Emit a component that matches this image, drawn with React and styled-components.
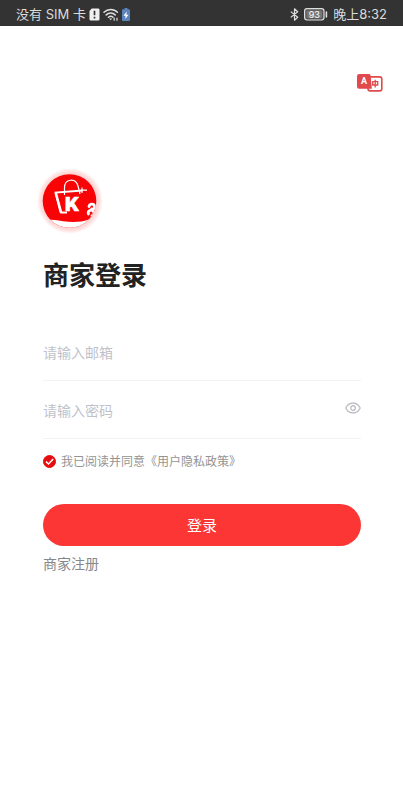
import React, { useState } from "react";
import styled, { createGlobalStyle } from "styled-components";

const GlobalStyle = createGlobalStyle`
  *, *::before, *::after { box-sizing: border-box; }
  body {
    margin: 0;
    background: #fff;
    font-family: "Noto Sans CJK SC", sans-serif;
  }
  button, input { font-family: inherit; }
`;

const Page = styled.div`
  min-height: 100vh;
  display: flex;
  flex-direction: column;
  background: #fff;
`;

const StatusBar = styled.header`
  display: flex;
  align-items: center;
  justify-content: space-between;
  height: 26px;
  padding: 2px 16px 0;
  background: #333;
  color: #dcdcdc;
  font-family: Inter, "Noto Sans CJK SC", sans-serif;
  font-size: 13px;
  line-height: 20px;
`;

const StatusGroup = styled.div`
  display: flex;
  align-items: center;
  gap: ${({ $gap }) => $gap}px;
  white-space: nowrap;

  svg { display: block; flex: none; }
`;

const TopBar = styled.div`
  display: flex;
  justify-content: flex-end;
  padding: 47px 20px 0;
`;

const LanguageButton = styled.button`
  display: block;
  padding: 0;
  border: 0;
  background: none;
  cursor: pointer;

  svg { display: block; }
`;

const Main = styled.main`
  display: flex;
  flex-direction: column;
  align-items: flex-start;
  padding: 73px 42px 40px 43px;
`;

const Logo = styled.svg`
  display: block;
  width: 70px;
  height: 70px;
  margin-left: -8px;
`;

const Title = styled.h1`
  margin: 18px 0 0;
  color: #222;
  font-size: 26px;
  font-weight: 700;
  line-height: 40px;
`;

const Form = styled.form`
  width: 100%;
  margin-top: 29px;
`;

const Field = styled.div`
  display: flex;
  align-items: center;
  height: ${({ $height }) => $height}px;
  border-bottom: 1px solid #f3f3f5;
`;

const Input = styled.input`
  flex: 1;
  min-width: 0;
  height: 40px;
  padding: 0;
  border: 0;
  outline: 0;
  background: none;
  color: #333;
  font-size: 14px;

  &::placeholder { color: #bfc2ca; opacity: 1; }
`;

const EyeButton = styled.button`
  padding: 0;
  margin-bottom: 4px;
  border: 0;
  background: none;
  cursor: pointer;

  svg { display: block; }
`;

const Agreement = styled.label`
  display: flex;
  align-items: center;
  gap: 5px;
  margin-top: 12px;
  color: #949494;
  font-size: 12px;
  line-height: 20px;
`;

const CheckWrap = styled.span`
  display: grid;
  width: 13px;
  height: 13px;

  > * { grid-area: 1 / 1; }
  svg { pointer-events: none; }
  input:not(:checked) + svg path { display: none; }
`;

const CheckInput = styled.input`
  appearance: none;
  width: 13px;
  height: 13px;
  margin: 0;
  border: 1px solid #c8c8c8;
  border-radius: 50%;

  &:checked { background: #e60d10; border-color: #e60d10; }
`;

const SubmitButton = styled.button`
  display: block;
  width: 100%;
  height: 42px;
  margin-top: 33px;
  padding: 0;
  border: 0;
  border-radius: 21px;
  background: #fc3535;
  color: #fff;
  font-size: 15px;
  line-height: 24px;
  cursor: pointer;
`;

const RegisterLink = styled.a`
  margin-top: 7px;
  color: #85878b;
  font-size: 14px;
  line-height: 20px;
  text-decoration: none;
`;

const SimIcon = () => (
  <svg width="11" height="13" viewBox="0 0 11 13" aria-hidden="true">
    <path d="M2.8 0.5h6.4a1.3 1.3 0 0 1 1.3 1.3v9.4a1.3 1.3 0 0 1-1.3 1.3H1.8A1.3 1.3 0 0 1 .5 11.2V3z" fill="#f0f0f0" />
    <path d="M5.5 2.8v4.4M5.5 8.7v1.7" stroke="#333" strokeWidth="1.7" />
  </svg>
);

const WifiIcon = () => (
  <svg width="16" height="13" viewBox="0 0 16 13" fill="none" stroke="#dedede" strokeWidth="1.5" strokeLinecap="round" aria-hidden="true">
    <path d="M1 4.3c3.7-3.8 9.9-3.8 13.4 0M3.2 6.9c2.5-2.5 6.500-2.500 9 0M5.500 9.300c1.300-1.200 3.200-1.200 4.500 0" />
    <path d="M6 10.400 7.700 12.300l1.600-1.900z" fill="#dedede" stroke="none" />
    <path d="M11.200 10.200v2M14 10.200v2" strokeWidth="1.200" />
  </svg>
);

const ChargeIcon = () => (
  <svg width="8" height="13" viewBox="0 0 8 13" aria-hidden="true">
    <path d="M2.5 0h3v1.2H7a1 1 0 0 1 1 1V12a1 1 0 0 1-1 1H1a1 1 0 0 1-1-1V2.2a1 1 0 0 1 1-1h1.5z" fill="#5b84bd" />
    <path d="M4.7 3.5 1.5 7.7h2.1L3.3 11l3.2-4.3H4.4z" fill="#fff" />
  </svg>
);

const BluetoothIcon = () => (
  <svg width="9" height="13" viewBox="0 0 9 13" fill="none" stroke="#dedede" strokeWidth="1.2" strokeLinejoin="round" aria-hidden="true">
    <path d="M.8 3.6 7.7 9.2 4.5 12.2V.8l3.2 3L.8 9.4" />
  </svg>
);

const BatteryIcon = () => (
  <svg width="24" height="13" viewBox="0 0 24 13" aria-hidden="true">
    <rect x=".6" y=".6" width="19.4" height="11.4" rx="2.4" fill="#555" stroke="#dedede" strokeWidth="1.2" />
    <rect x="2.5" y="2.5" width="15.5" height="7.6" rx="1" fill="#777" />
    <path d="M22.4 4v5" stroke="#dedede" strokeWidth="1.6" strokeLinecap="round" />
    <text x="10.3" y="9.6" textAnchor="middle" fill="#fff" fontFamily="Inter, sans-serif" fontSize="9">93</text>
  </svg>
);

const LanguageIcon = () => (
  <svg width="26" height="20" viewBox="0 0 26 20" aria-hidden="true">
    <rect x="11" y="3.9" width="13.8" height="14" rx="2.2" fill="#fff" stroke="#e14a4c" strokeWidth="1.6" />
    <path d="M2.3 1h9.4a2 2 0 0 1 1.9 1.4l1.300 13.400H2.300A2.200 2.200 0 0 1 0 13.600V3.200A2.200 2.200 0 0 1 2.300 1z" fill="#e14a4c" />
    <text x="7" y="11.300" textAnchor="middle" fill="#fff" fontFamily="Roboto, sans-serif" fontSize="9" fontWeight="700">A</text>
    <path d="M15.700 8.700h5v3.300h-5zM18.200 6.800v7.700" fill="none" stroke="#e14a4c" strokeWidth="1.300" />
  </svg>
);

const EyeIcon = () => (
  <svg width="16" height="12" viewBox="0 0 16 12" fill="none" stroke="#b4b7bc" strokeWidth="1.200" aria-hidden="true">
    <path d="M.8 6C4-.6 12-.6 15.200 6 12 12.600 4 12.600.8 6z" />
    <circle cx="8" cy="6" r="2.300" />
  </svg>
);

const BrandLogo = () => (
  <Logo viewBox="0 0 70 70" role="img" aria-label="商家">
    <defs>
      <radialGradient id="halo">
        <stop offset="78%" stopColor="#ffcaca" />
        <stop offset="91%" stopColor="#ffe4e4" />
        <stop offset="100%" stopColor="#fff" />
      </radialGradient>
      <clipPath id="disc"><circle cx="34.500" cy="35" r="26.800" /></clipPath>
    </defs>
    <circle cx="35" cy="35" r="33" fill="url(#halo)" />
    <g clipPath="url(#disc)">
      <path d="M0 0h70v70H0z" fill="#f80406" />
      <path d="M6 54c8-1 14 .2 22 1.200 10 1.300 19 .8 25-1.500l9-3v20H6z" fill="#fff" />
      <g fill="none" stroke="#fff" strokeWidth="2.800" strokeLinecap="round">
        <path d="M54 40.500c.5-3 5-3.200 5.500-.3.400 2.300-1.500 3.200-2.800 2.700" />
        <path d="M53.500 48c-1.200-3.500 3-5 4.800-2.800 1.500 2 .2 4.300-1.300 4.500" />
        <path d="M61 42v12" />
      </g>
    </g>
    <g fill="none" stroke="#fff">
      <path d="M47.500 24.500 20.500 26.500l5.500 20h6" strokeWidth="1.800" />
      <path d="M20.800 27 26 46.500" strokeWidth="2.600" />
      <path d="M47 21.500v5.500M52 24.200h-6" strokeWidth="1.200" />
      <path d="M29.500 29v-7c0-9.500 11-10.500 13.500-2l2 8" strokeWidth="1.200" />
    </g>
    <text x="30" y="45" fill="#fff" stroke="#fff" strokeWidth=".5" fontFamily="Inter, sans-serif" fontSize="19" fontWeight="900">K</text>
  </Logo>
);

export default function App() {
  const [agreed, setAgreed] = useState(true);
  const [visible, setVisible] = useState(false);

  return (
    <Page>
      <GlobalStyle />
      <StatusBar>
        <StatusGroup $gap={3}>
          <span>没有 SIM 卡</span>
          <SimIcon />
          <WifiIcon />
          <ChargeIcon />
        </StatusGroup>
        <StatusGroup $gap={5}>
          <BluetoothIcon />
          <BatteryIcon />
          <span>晚上8:32</span>
        </StatusGroup>
      </StatusBar>
      <TopBar>
        <LanguageButton type="button" aria-label="切换语言">
          <LanguageIcon />
        </LanguageButton>
      </TopBar>
      <Main>
        <BrandLogo />
        <Title>商家登录</Title>
        <Form onSubmit={(e) => e.preventDefault()}>
          <Field $height={58}>
            <Input type="email" placeholder="请输入邮箱" aria-label="邮箱" />
          </Field>
          <Field $height={58}>
            <Input type={visible ? "text" : "password"} placeholder="请输入密码" aria-label="密码" />
            <EyeButton type="button" aria-label="显示密码" onClick={() => setVisible(!visible)}>
              <EyeIcon />
            </EyeButton>
          </Field>
          <Agreement>
            <CheckWrap>
              <CheckInput type="checkbox" checked={agreed} onChange={(e) => setAgreed(e.target.checked)} />
              <svg width="13" height="13" viewBox="0 0 13 13" aria-hidden="true">
                <path d="m3 6.600 2.500 2.400 4.700-4.900" fill="none" stroke="#fff" strokeWidth="1.500" />
              </svg>
            </CheckWrap>
            <span>我已阅读并同意《用户隐私政策》</span>
          </Agreement>
          <SubmitButton type="submit">登录</SubmitButton>
        </Form>
        <RegisterLink href="#register">商家注册</RegisterLink>
      </Main>
    </Page>
  );
}
